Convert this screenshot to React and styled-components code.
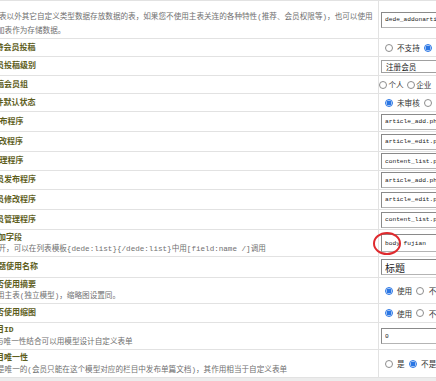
import React from 'react';
import styled, { createGlobalStyle } from 'styled-components';

const GlobalStyle = createGlobalStyle`
  html, body {
    margin: 0;
    padding: 0;
    background: #ececec;
  }
  body {
    font-family: "Noto Sans CJK SC", sans-serif;
  }
`;

const MONO = `"Liberation Mono", "Noto Sans CJK SC", monospace`;

const Frame = styled.div`
  width: 436px;
  height: 381px;
  overflow: hidden;
  background: #ececec;
`;

const Table = styled.div`
  width: 640px;
  background: #fff;
  border-top: 1px solid #e2e2e2;
`;

const Row = styled.div`
  display: grid;
  grid-template-columns: 379px 1fr;
  height: ${p => p.$h}px;
  box-sizing: border-box;
  border-bottom: 1px solid #e2e2e2;
`;

const LabelCell = styled.div`
  border-right: 1px solid #e2e2e2;
  overflow: hidden;
  display: flex;
  flex-direction: column;
  justify-content: ${p => (p.$end ? 'flex-end' : 'center')};
`;

const Title = styled.div`
  font: bold 8px/12px ${MONO};
  color: #5e5e1c;
  white-space: nowrap;
  margin-left: -${p => p.$cut || 0}px;
`;

const Desc = styled.div`
  font: 7.6px/${p => p.$lh || 12}px ${MONO};
  color: #707070;
  white-space: nowrap;
  margin-left: -${p => p.$cut || 0}px;
`;

const ValueCell = styled.div`
  position: relative;
  display: flex;
  align-items: center;
  padding-left: ${p => (p.$pad === undefined ? 2 : p.$pad)}px;
`;

const TextBox = styled.input`
  box-sizing: border-box;
  width: 200px;
  height: ${p => p.$h || 16}px;
  margin: 0;
  padding: 0 0 0 3px;
  border: 1px solid #b4b4b4;
  border-top-color: #8a8a8a;
  border-left-color: #8a8a8a;
  background: #fff;
  font: ${p => (p.$cjk ? `10px "Noto Sans CJK SC", sans-serif` : `6.2px ${MONO}`)};
  color: #222;
  outline: none;
`;

const SelectBox = styled.div`
  box-sizing: border-box;
  width: 200px;
  height: 13px;
  display: flex;
  align-items: center;
  padding-left: 4px;
  border: 1px solid #a0a0a0;
  background: #fff;
  font: 7.6px "Noto Sans CJK SC", sans-serif;
  color: #222;
`;

const RadioGroup = styled.div`
  display: flex;
  align-items: center;
  gap: ${p => p.$gap}px;
  white-space: nowrap;
  font: 7.6px "Noto Sans CJK SC", sans-serif;
  color: #333;
`;

const Option = styled.label`
  display: flex;
  align-items: center;
  gap: ${p => p.$gap}px;
`;

const Radio = styled.span`
  flex: none;
  width: 8px;
  height: 8px;
  box-sizing: border-box;
  border-radius: 50%;
  border: 1px solid ${p => (p.$on ? '#2a76e4' : '#8d8d8d')};
  background: ${p =>
    p.$on ? 'radial-gradient(circle, #2a76e4 0 2.3px, #d6e5fb 2.6px)' : '#fff'};
`;

const Mark = styled.span`
  position: absolute;
  left: -6px;
  top: 2px;
  width: 28px;
  height: 23px;
  box-sizing: border-box;
  border: 2px solid #df2a2e;
  border-radius: 50%;
  pointer-events: none;
`;

function Choice({ on, gap = 4.5, children }) {
  return (
    <Option $gap={gap}>
      <Radio $on={on} />
      <span>{children}</span>
    </Option>
  );
}

export default function App() {
  return (
    <>
      <GlobalStyle />
      <Frame>
        <Table>
          <Row $h={38}>
            <LabelCell $end>
              <Desc $lh={14} $cut={1}>表以外其它自定义类型数据存放数据的表，如果您不使用主表关连的各种特性(推荐、会员权限等)，也可以使用</Desc>
              <Desc $lh={14} $cut={3}>加表作为存储数据。</Desc>
            </LabelCell>
            <ValueCell>
              <TextBox readOnly value="dede_addonarticle" />
            </ValueCell>
          </Row>

          <Row $h={18}>
            <LabelCell><Title $cut={4.5}>持会员投稿</Title></LabelCell>
            <ValueCell $pad={5.5}>
              <RadioGroup $gap={4}>
                <Choice>不支持</Choice>
                <Choice on>支持</Choice>
              </RadioGroup>
            </ValueCell>
          </Row>

          <Row $h={19}>
            <LabelCell><Title $cut={4}>员投稿级别</Title></LabelCell>
            <ValueCell>
              <SelectBox>注册会员</SelectBox>
            </ValueCell>
          </Row>

          <Row $h={18}>
            <LabelCell><Title $cut={4}>稿会员组</Title></LabelCell>
            <ValueCell $pad={0}>
              <RadioGroup $gap={3}>
                <Choice gap={1.5}>个人</Choice>
                <Choice gap={1.5}>企业</Choice>
              </RadioGroup>
            </ValueCell>
          </Row>

          <Row $h={18}>
            <LabelCell><Title $cut={4.5}>件默认状态</Title></LabelCell>
            <ValueCell $pad={5.5}>
              <RadioGroup $gap={4}>
                <Choice on>未审核</Choice>
                <Choice>已审核</Choice>
              </RadioGroup>
            </ValueCell>
          </Row>

          <Row $h={20}>
            <LabelCell><Title $cut={0.5}>布程序</Title></LabelCell>
            <ValueCell><TextBox readOnly value="article_add.php" /></ValueCell>
          </Row>
          <Row $h={20}>
            <LabelCell><Title $cut={1}>改程序</Title></LabelCell>
            <ValueCell><TextBox readOnly value="article_edit.php" /></ValueCell>
          </Row>
          <Row $h={19}>
            <LabelCell><Title $cut={0.5}>理程序</Title></LabelCell>
            <ValueCell><TextBox readOnly value="content_list.php" /></ValueCell>
          </Row>
          <Row $h={19}>
            <LabelCell><Title $cut={4}>员发布程序</Title></LabelCell>
            <ValueCell><TextBox readOnly value="article_add.php" /></ValueCell>
          </Row>
          <Row $h={20}>
            <LabelCell><Title $cut={4}>员修改程序</Title></LabelCell>
            <ValueCell><TextBox readOnly value="article_edit.php" /></ValueCell>
          </Row>
          <Row $h={20}>
            <LabelCell><Title $cut={4}>员管理程序</Title></LabelCell>
            <ValueCell><TextBox readOnly value="content_list.php" /></ValueCell>
          </Row>

          <Row $h={27}>
            <LabelCell>
              <Title $cut={2}>加字段</Title>
              <Desc $lh={11} $cut={1.5}>开，可以在列表模板{'{dede:list}{/dede:list}'}中用[field:name /]调用</Desc>
            </LabelCell>
            <ValueCell>
              <TextBox $h={18} readOnly value="body fujian" />
              <Mark />
            </ValueCell>
          </Row>

          <Row $h={21}>
            <LabelCell><Title $cut={2}>题使用名称</Title></LabelCell>
            <ValueCell><TextBox $cjk readOnly value="标题" /></ValueCell>
          </Row>

          <Row $h={26}>
            <LabelCell>
              <Title $cut={4}>否使用摘要</Title>
              <Desc $lh={11} $cut={3}>用主表(独立模型)，缩略图设置同。</Desc>
            </LabelCell>
            <ValueCell $pad={5.5}>
              <RadioGroup $gap={4}>
                <Choice on>使用</Choice>
                <Choice>不使用</Choice>
              </RadioGroup>
            </ValueCell>
          </Row>

          <Row $h={19}>
            <LabelCell><Title $cut={4}>否使用缩图</Title></LabelCell>
            <ValueCell $pad={5.5}>
              <RadioGroup $gap={4}>
                <Choice on>使用</Choice>
                <Choice>不使用</Choice>
              </RadioGroup>
            </ValueCell>
          </Row>

          <Row $h={27}>
            <LabelCell>
              <Title $cut={4}>目ID</Title>
              <Desc $cut={4}>与唯一性结合可以用模型设计自定义表单</Desc>
            </LabelCell>
            <ValueCell><TextBox readOnly value="0" /></ValueCell>
          </Row>

          <Row $h={28}>
            <LabelCell>
              <Title $cut={4}>目唯一性</Title>
              <Desc $cut={3}>是唯一的(会员只能在这个模型对应的栏目中发布单篇文档)，其作用相当于自定义表单</Desc>
            </LabelCell>
            <ValueCell $pad={5.5}>
              <RadioGroup $gap={4}>
                <Choice>是</Choice>
                <Choice on>不是</Choice>
              </RadioGroup>
            </ValueCell>
          </Row>
        </Table>
      </Frame>
    </>
  );
}
